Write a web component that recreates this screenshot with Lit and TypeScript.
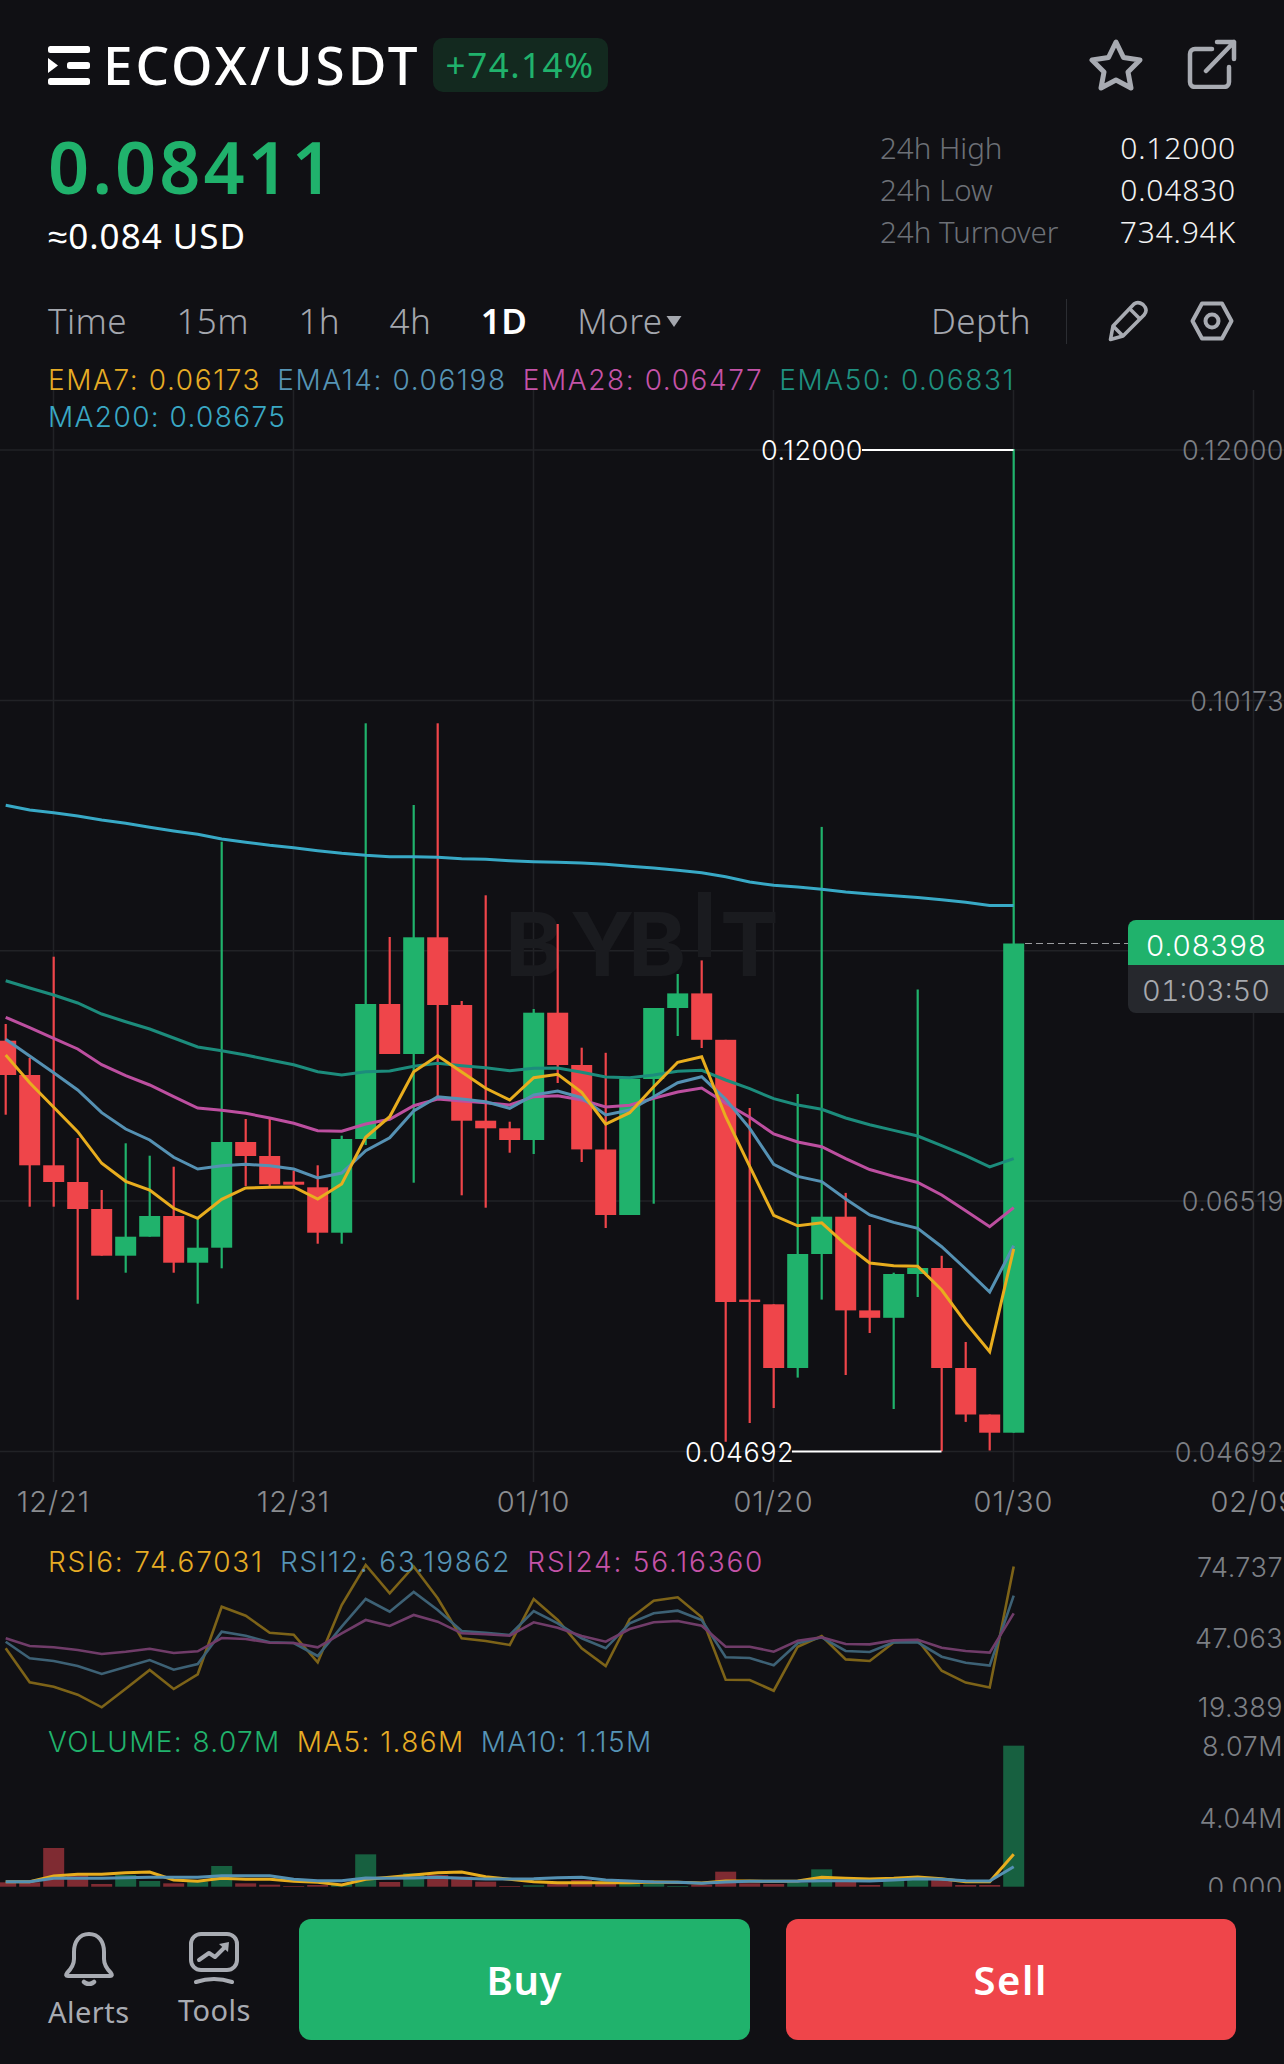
import { LitElement, html, css, svg } from 'lit';
import { customElement } from 'lit/decorators.js';

const GREEN = '#20b26c';
const RED = '#ef454a';
const YELLOW = '#e8ad1e';
const BLUE = '#5591b3';
const PINK = '#bd4fa0';
const TEAL = '#1c8c7c';
const CYAN = '#38a9c6';

const xAt = (i: number) => 5.7 + 24 * i;

// high, body top, body bottom, low, up?
const CANDLES: [number, number, number, number, number][] = [
  [1024, 1040.7, 1075, 1114.7, 0], [1058, 1075, 1165.3, 1206.7, 0], [956.7, 1165.3, 1182, 1206.7, 0],
  [1138, 1182, 1209, 1299.7, 0], [1190, 1209, 1255.7, 1255.7, 0], [1143.3, 1236.7, 1255.7, 1272.7, 1],
  [1155.7, 1216, 1236.7, 1236.7, 1], [1166.7, 1216, 1262.7, 1272.7, 0], [1218.3, 1247.7, 1262.7, 1303.7, 1],
  [841.7, 1142, 1247.7, 1268.3, 1], [1119, 1142, 1156, 1186, 0], [1119, 1156, 1184.3, 1186, 0],
  [1170.7, 1181.7, 1184.7, 1186, 0], [1165.3, 1187.3, 1232.7, 1243.7, 0], [1135.7, 1139, 1232.7, 1243.7, 1],
  [723.3, 1004, 1139, 1145, 1], [937, 1004, 1054, 1054, 0], [805, 937.3, 1054, 1182.7, 1],
  [723.3, 937.3, 1005, 1097, 0], [1001, 1005, 1120.7, 1195.3, 0], [895.3, 1120.7, 1128.3, 1207.7, 0],
  [1121.7, 1128.3, 1140, 1152.7, 0], [1009, 1012.7, 1140, 1154, 1], [924, 1012.7, 1065, 1083, 0],
  [1047.7, 1065, 1149.4, 1162, 0], [1052.8, 1149.5, 1215, 1228, 0], [1078.8, 1078.8, 1215, 1215, 1],
  [1008, 1008, 1079, 1203.7, 1], [974, 993.4, 1008, 1036, 1], [960.4, 993.4, 1039.8, 1048, 0],
  [1039.8, 1039.8, 1302, 1441.8, 0], [1108, 1299.6, 1302, 1423, 0], [1304.3, 1304.3, 1368, 1408, 0],
  [1094, 1254, 1368, 1377.6, 1], [826.9, 1216.7, 1254, 1299.6, 1], [1192.9, 1216.7, 1310.4, 1375, 0],
  [1225, 1310.4, 1317.8, 1333, 0], [1272.7, 1274, 1317.8, 1409, 1], [989.5, 1268, 1274, 1297, 1],
  [1255.8, 1268, 1368, 1451.3, 0], [1342, 1368, 1414.5, 1421.9, 0], [1414.5, 1414.5, 1432.7, 1450.5, 0],
  [449, 943.5, 1432.7, 1432.7, 1],
];

const MA200 = [805.3, 810, 812.7, 816, 820, 823.3, 827.3, 831, 834.3, 839, 842.3, 845.3, 847.7, 850.7, 853.3, 855.3, 856.7, 856.7, 857.3, 858.7, 859.3, 860.7, 861.7, 862.3, 863, 864.3, 866.3, 868, 870.3, 872.7, 876.7, 882, 885.3, 887, 889.3, 892, 894, 895.8, 897.6, 899.7, 902.3, 905.4, 905.4];
const EMA50 = [980.7, 988, 995, 1003, 1014, 1021.7, 1029, 1038, 1047, 1050.7, 1055, 1060, 1064.7, 1071.7, 1075, 1071.7, 1071, 1066.3, 1063.3, 1065.7, 1067.7, 1070.7, 1068.3, 1068, 1072.3, 1077, 1077.7, 1075, 1071.3, 1070.3, 1080, 1088.7, 1098.7, 1105, 1109.3, 1118, 1124.8, 1130.4, 1136, 1145.6, 1155.6, 1166.9, 1158.6];
const EMA28 = [1017.3, 1027.7, 1038.3, 1049, 1064.7, 1075.7, 1085, 1096.7, 1108, 1110.3, 1113.3, 1118, 1123.3, 1130.7, 1131.3, 1124, 1119.3, 1105.7, 1099, 1101, 1102.7, 1105, 1096.7, 1095.7, 1100, 1107, 1105.3, 1098.3, 1092, 1088, 1103.3, 1117.3, 1134, 1142, 1146.7, 1158.6, 1169.5, 1176.4, 1182.5, 1195, 1210.7, 1226.7, 1207.6];
const EMA14 = [1039.3, 1056, 1072.7, 1090, 1112.7, 1129, 1140, 1157.3, 1169, 1165.7, 1164.3, 1165.7, 1169, 1178, 1173, 1150.7, 1137.7, 1111, 1096.7, 1099, 1101.7, 1108.3, 1095, 1091, 1097.7, 1115, 1110, 1096.7, 1082.7, 1076.7, 1099.3, 1128.3, 1164.3, 1176.4, 1181.6, 1199, 1215, 1222.4, 1228.4, 1246.7, 1269, 1292, 1245.8];
const EMA7 = [1055, 1082.7, 1107.3, 1131.7, 1163.3, 1181.3, 1190, 1208.3, 1218.3, 1199.3, 1188, 1187.3, 1187, 1199, 1184, 1137.3, 1116.7, 1071.7, 1055.7, 1072, 1088.3, 1100, 1077.7, 1074.3, 1092.3, 1124, 1112.7, 1086.7, 1062.3, 1056.7, 1116.7, 1166.4, 1215.4, 1225.8, 1222.8, 1244.5, 1263, 1265.7, 1266.2, 1290, 1322.6, 1351.6, 1248.8];

const RSI6 = [1648.3, 1682.3, 1686.7, 1694.7, 1707.3, 1688.7, 1670, 1689, 1674.3, 1606.7, 1615.7, 1632.7, 1634.7, 1662.3, 1605, 1565, 1593.3, 1566.5, 1598.3, 1638.3, 1641, 1645, 1599, 1620, 1648.3, 1666, 1619, 1600.7, 1597.3, 1617.3, 1679.7, 1680, 1690.7, 1646.7, 1636, 1659.4, 1661, 1642.4, 1640, 1670.7, 1682.6, 1687.4, 1566.4];
const RSI12 = [1641.7, 1658.3, 1661, 1666, 1674, 1667, 1660, 1669.7, 1664, 1631.7, 1635.7, 1642.3, 1643, 1656, 1626.7, 1599, 1611.7, 1592, 1610, 1631, 1632.7, 1635, 1611, 1623.3, 1638.3, 1648.3, 1623.3, 1613.3, 1610.7, 1620, 1657.3, 1658, 1665.3, 1643.3, 1637.3, 1651, 1652, 1642.4, 1642.4, 1656.7, 1662.8, 1665.6, 1595.7];
const RSI24 = [1638.3, 1646, 1647.3, 1650, 1654, 1651.7, 1648.7, 1653, 1651.3, 1638, 1639, 1642.7, 1643, 1647.3, 1633.3, 1620, 1626, 1615, 1621.7, 1633.3, 1634.3, 1635.7, 1622.3, 1627.7, 1636, 1641.7, 1629, 1622.3, 1621, 1625.7, 1646.7, 1646.7, 1651.7, 1640.7, 1637.3, 1644, 1644.4, 1640.4, 1639.7, 1647.8, 1651, 1652.6, 1613.4];

// tops of the volume bars, in 3x crop units above 1820
const VOL = [187, 187, 84, 165, 192, 165, 183, 190, 185, 138, 190, 194, 198, 195, 192, 103, 186, 160, 165, 170, 185, 198, 196, 190, 180, 190, 192, 192, 198, 194, 155, 190, 192, 188, 148, 180, 195, 180, 175, 180, 195, 195, -223];
const VOL_MA5 = [185, 185, 168, 163, 163, 158, 156, 180, 184, 175, 178, 178, 184, 187, 195, 178, 172, 165, 158, 156, 170, 178, 185, 188, 188, 188, 188, 186, 187, 189, 183, 183, 184, 183, 172, 175, 177, 175, 171, 176, 185, 185, 103];
const VOL_MA10 = [185, 185, 175, 175, 175, 173, 172, 172, 172, 167, 167, 167, 178, 182, 182, 174, 175, 174, 172, 175, 177, 177, 176, 173, 172, 180, 183, 186, 187, 190, 186, 184, 184, 184, 182, 182, 183, 180, 176, 178, 182, 183, 140];

const H_GRID = [450, 700.4, 950.7, 1201, 1451.5];
const V_GRID = [53.5, 293.5, 533.5, 773.5, 1013.5, 1253.5];
const DATES = ['12/21', '12/31', '01/10', '01/20', '01/30', '02/09'];

const points = (ys: number[]) => ys.map((y, i) => `${xAt(i)},${y}`).join(' ');
const volPoints = (ys: number[]) => ys.map((z, i) => `${xAt(i)},${1820 + z / 3}`).join(' ');

@customElement('app-root')
export class AppRoot extends LitElement {
  static styles = css`
    :host {
      display: block;
      width: 1284px;
      height: 2064px;
      overflow: hidden;
      background: #101014;
      color: #fff;
      font-family: 'Noto Sans', sans-serif;
    }

    .top {
      display: flex;
      align-items: center;
      height: 54px;
      padding: 38px 47px 0 48px;
    }
    .menu { width: 42px; height: 39px; margin-right: 13px; }
    .pair { font-size: 53px; font-weight: 500; line-height: 54px; letter-spacing: 3px; }
    .change {
      margin-left: 12px;
      height: 54px;
      line-height: 54px;
      padding: 0 13px;
      border-radius: 10px;
      background: #13291f;
      color: #20b26c;
      font-size: 35px;
      letter-spacing: 1.5px;
    }
    .top-icons { margin-left: auto; display: flex; gap: 44px; }
    .top-icons svg { display: block; }

    .summary {
      display: flex;
      justify-content: space-between;
      padding: 32px 48px 0;
      height: 136px;
    }
    .price { font-size: 72px; font-weight: 600; line-height: 84px; color: #20b26c; letter-spacing: 3px; }
    .usd { font-size: 35px; line-height: 48px; margin-top: 4px; letter-spacing: 1px; }
    .stats {
      display: grid;
      grid-template-columns: 191px 165px;
      grid-auto-rows: 42px;
      font-size: 30px;
      line-height: 42px;
      font-weight: 300;
      padding-top: 3px;
    }
    .stats .k { color: #6d7077; font-size: 29.5px; }
    .stats .v { text-align: right; color: #f2f2f2; letter-spacing: 0.8px; }

    .tabs {
      display: flex;
      align-items: center;
      height: 46px;
      margin-top: 38px;
      padding: 0 50px 0 48px;
      font-size: 35px;
      font-weight: 300;
      letter-spacing: 0.4px;
      color: #a4a7ae;
    }
    .tabs span { line-height: 46px; }
    .tab { margin-right: 49.5px; }
    .tab.on { color: #fff; font-weight: 600; margin-right: 50px; }
    .caret { display: inline-block; width: 16px; height: 12px; margin-left: 4px; }
    .depth { margin-left: auto; }
    .divider { width: 1px; height: 45px; background: #2b2d32; margin: 0 41px 0 35px; }
    .tabs svg { display: block; }
    .hex { margin-left: 42px; }

    .legend {
      display: flex;
      gap: 16px;
      font-family: Inter, sans-serif;
      font-size: 28px;
      line-height: 34px;
      font-weight: 300;
      letter-spacing: 1.4px;
      white-space: nowrap;
    }
    .legend.main { padding: 19px 48px 0; height: 27px; letter-spacing: 1.6px; }

    .chart {
      position: relative;
      height: 1502px;
      overflow: hidden;
    }
    .chart > svg { display: block; }
    .chart text {
      font-family: Inter, sans-serif;
      font-weight: 300;
      font-size: 27px;
      letter-spacing: 0.5px;
    }
    .chart .dates text { font-size: 29px; letter-spacing: 1px; }
    .chart .mark text { font-size: 88px; font-weight: 700; letter-spacing: 0; }
    .chart .legend { position: absolute; left: 48px; }
    .chart .legend.ma200 { top: 10px; }
    .chart .legend.rsi { top: 1155px; letter-spacing: 1.8px; }
    .chart .legend.vol { top: 1335px; }
    .tag {
      position: absolute;
      left: 1128px;
      width: 156px;
      text-align: center;
      font-family: Inter, sans-serif;
      font-weight: 300;
      font-size: 29px;
      font-variant-numeric: tabular-nums;
    }
    .tag.last { top: 530px; height: 45px; line-height: 52px; background: #20b26c; border-radius: 8px 0 0 0; color: #fff; }
    .tag.timer { top: 575px; height: 48px; line-height: 52px; background: #26282d; border-radius: 0 0 0 8px; color: #a6a9ae; }

    .footer {
      display: flex;
      height: 121px;
      padding: 27px 48px 0;
      gap: 36px;
    }
    .tools { display: flex; justify-content: space-between; width: 203px; margin-right: 12px; }
    .tool {
      display: flex;
      flex-direction: column;
      align-items: center;
      font-size: 29px;
      line-height: 38px;
      letter-spacing: 0.5px;
      color: #a8abb2;
      padding-top: 13px;
    }
    .tool svg { display: block; margin-bottom: 7px; }
    .btn {
      flex: 1;
      display: flex;
      align-items: center;
      justify-content: center;
      border-radius: 12px;
      font-size: 40px;
      font-weight: 600;
      letter-spacing: 0.6px;
    }
    .btn.buy { background: #20b26c; }
    .btn.sell { background: #ef454a; letter-spacing: 1.6px; }
  `;

  renderLegend(items: [string, string][], cls: string) {
    return html`<div class="legend ${cls}">
      ${items.map(([t, c]) => html`<span style="color:${c}">${t}</span>`)}
    </div>`;
  }

  renderChart() {
    return svg`
      <svg width="1284" height="1502" viewBox="0 390 1284 1502">
        ${H_GRID.map((y) => svg`<line x1="0" x2="1284" y1=${y} y2=${y} stroke="#212226" stroke-width="1.5"/>`)}
        ${V_GRID.map((x) => svg`<line x1=${x} x2=${x} y1="390" y2="1482" stroke="#212226" stroke-width="1.5"/>`)}

        <g class="mark" fill="#1a1b1f">
          <text x="505" y="976">B</text>
          <text x="570" y="976">Y</text>
          <text x="628" y="976">B</text>
          <rect x="698" y="892" width="13" height="65"/>
          <text x="720" y="976">T</text>
        </g>

        ${CANDLES.map(([hi, top, bot, lo, up], i) => {
          const c = up ? GREEN : RED;
          const x = xAt(i);
          return svg`
            <rect x=${x - 1.1} y=${hi} width="2.2" height=${lo - hi} fill=${c}/>
            <rect x=${x - 10.5} y=${top} width="21" height=${Math.max(bot - top, 2)} fill=${c}/>`;
        })}

        ${[[MA200, CYAN], [EMA50, TEAL], [EMA28, PINK], [EMA14, BLUE], [EMA7, YELLOW]].map(
          ([ys, c]) => svg`<polyline points=${points(ys as number[])} fill="none" stroke=${c as string} stroke-width="3"/>`
        )}

        <line x1="862" x2="1013.5" y1="450" y2="450" stroke="#fff" stroke-width="2"/>
        <text x="761" y="460" fill="#fff">0.12000</text>
        <line x1="792" x2="941.5" y1="1451.5" y2="1451.5" stroke="#fff" stroke-width="2"/>
        <text x="685" y="1462" fill="#fff">0.04692</text>
        <line x1="1025" x2="1128" y1="943.5" y2="943.5" stroke="#9a9c9f" stroke-width="1" stroke-dasharray="7 4"/>

        <g fill="#7c7f84" text-anchor="end">
          <text x="1284" y="460">0.12000</text>
          <text x="1284" y="711">0.10173</text>
          <text x="1284" y="1211">0.06519</text>
          <text x="1284" y="1462">0.04692</text>
          <text x="1283" y="1577">74.737</text>
          <text x="1283" y="1648">47.063</text>
          <text x="1283" y="1717">19.389</text>
          <text x="1283" y="1756">8.07M</text>
          <text x="1283" y="1828">4.04M</text>
          <text x="1283" y="1897">0.000</text>
        </g>
        <g class="dates" fill="#8a8c90" text-anchor="middle">
          ${DATES.map((d, i) => svg`<text x=${V_GRID[i]} y="1512">${d}</text>`)}
        </g>

        ${[[RSI6, '#7d6318'], [RSI12, '#3d6175'], [RSI24, '#703c69']].map(
          ([ys, c]) => svg`<polyline points=${points(ys as number[])} fill="none" stroke=${c as string} stroke-width="2.6"/>`
        )}

        ${VOL.map((z, i) => {
          const up = CANDLES[i][4];
          const y = 1820 + z / 3;
          return svg`<rect x=${xAt(i) - 10.5} y=${y} width="21" height=${1886.7 - y} fill=${up ? '#176040' : '#7f2b32'}/>`;
        })}
        <polyline points=${volPoints(VOL_MA5)} fill="none" stroke=${YELLOW} stroke-width="3"/>
        <polyline points=${volPoints(VOL_MA10)} fill="none" stroke=${BLUE} stroke-width="3"/>
      </svg>`;
  }

  render() {
    return html`
      <div class="top">
        <svg class="menu" viewBox="0 0 42 39" fill="#fff">
          <rect x="0" y="0" width="42" height="7" rx="2.5"/>
          <rect x="19" y="16" width="23" height="7" rx="2.5"/>
          <rect x="0" y="32" width="42" height="7" rx="2.5"/>
          <path d="M0 12 L10 19.5 L0 27 Z"/>
        </svg>
        <span class="pair">ECOX/USDT</span>
        <span class="change">+74.14%</span>
        <div class="top-icons">
          <svg width="54" height="52" viewBox="0 0 54 52" fill="none" stroke="#a8abb2" stroke-width="5" stroke-linejoin="round">
            <path d="M27 3 L34.5 18.5 L51 21 L39 33 L42 49 L27 41 L12 49 L15 33 L3 21 L19.5 18.5 Z"/>
          </svg>
          <svg width="50" height="50" viewBox="0 0 50 50" fill="none" stroke="#a8abb2" stroke-width="4.5" stroke-linecap="round" stroke-linejoin="round">
            <path d="M25 10 H8 a5 5 0 0 0 -5 5 V43 a5 5 0 0 0 5 5 H37 a5 5 0 0 0 5 -5 V28"/>
            <path d="M19 32 L47 3 M30 3 H47 V20"/>
          </svg>
        </div>
      </div>

      <div class="summary">
        <div>
          <div class="price">0.08411</div>
          <div class="usd">≈0.084 USD</div>
        </div>
        <div class="stats">
          <span class="k">24h High</span><span class="v">0.12000</span>
          <span class="k">24h Low</span><span class="v">0.04830</span>
          <span class="k">24h Turnover</span><span class="v">734.94K</span>
        </div>
      </div>

      <div class="tabs">
        <span class="tab">Time</span>
        <span class="tab">15m</span>
        <span class="tab">1h</span>
        <span class="tab">4h</span>
        <span class="tab on">1D</span>
        <span>More</span>
        <svg class="caret" viewBox="0 0 15 12"><path d="M0 1 H15 L7.5 12 Z" fill="#a4a7ae"/></svg>
        <span class="depth">Depth</span>
        <div class="divider"></div>
        <svg width="40" height="42" viewBox="0 0 40 42" fill="none" stroke="#a8abb2" stroke-width="3.6" stroke-linejoin="round">
          <path d="M2.5 39.5 L5 26 L26 4 Q30 1 35 4.5 L37 7 Q39.5 11 36 15 L15 36 Z"/>
          <path d="M5 26 L15 36 M22 9 L32 19"/>
        </svg>
        <svg class="hex" width="44" height="40" viewBox="0 0 44 40" fill="none" stroke="#a8abb2" stroke-width="4" stroke-linejoin="round">
          <path d="M2.5 20 L12 2.5 H32 L41.5 20 L32 37.5 H12 Z"/>
          <circle cx="22" cy="20" r="6.5"/>
        </svg>
      </div>

      ${this.renderLegend([
        ['EMA7: 0.06173', '#e6ac25'],
        ['EMA14: 0.06198', '#5694b5'],
        ['EMA28: 0.06477', '#c553a8'],
        ['EMA50: 0.06831', '#1f9080'],
      ], 'main')}

      <div class="chart">
        ${this.renderChart()}
        ${this.renderLegend([['MA200: 0.08675', '#3aa8c4']], 'ma200')}
        ${this.renderLegend([
          ['RSI6: 74.67031', '#e6ac25'],
          ['RSI12: 63.19862', '#5694b5'],
          ['RSI24: 56.16360', '#c553a8'],
        ], 'rsi')}
        ${this.renderLegend([
          ['VOLUME: 8.07M', GREEN],
          ['MA5: 1.86M', '#e6ac25'],
          ['MA10: 1.15M', '#5694b5'],
        ], 'vol')}
        <div class="tag last">0.08398</div>
        <div class="tag timer">01:03:50</div>
      </div>

      <div class="footer">
        <div class="tools">
          <div class="tool">
            <svg width="50" height="54" viewBox="0 0 50 54" fill="none" stroke="#a8abb2" stroke-width="4" stroke-linejoin="round" stroke-linecap="round">
              <path d="M25 2 C15 2 10 10 10 20 V27 C10 33 6 38 3 41 Q1 44 4 44 H46 Q49 44 47 41 C44 38 40 33 40 27 V20 C40 10 35 2 25 2 Z"/>
              <path d="M20 50 Q25 54 30 50" stroke-width="4.5"/>
            </svg>
            <span>Alerts</span>
          </div>
          <div class="tool">
            <svg width="50" height="52" viewBox="0 0 50 52" fill="none" stroke="#a8abb2" stroke-width="4" stroke-linejoin="round" stroke-linecap="round">
              <rect x="2" y="2" width="46" height="36" rx="10"/>
              <path d="M10 28 L20 21 L26 25 L36 15"/>
              <path d="M30 12 L40 10 L39 20 Z" fill="#a8abb2" stroke="none"/>
              <path d="M7 50 Q25 44 43 50"/>
            </svg>
            <span>Tools</span>
          </div>
        </div>
        <div class="btn buy">Buy</div>
        <div class="btn sell">Sell</div>
      </div>
    `;
  }
}
